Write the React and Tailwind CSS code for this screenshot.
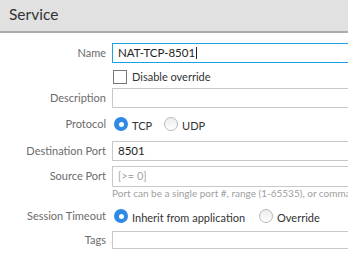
function Radio({ checked }) {
  return checked ? (
    <span className="flex h-[14px] w-[14px] shrink-0 items-center justify-center rounded-full bg-[#2f8ae6]">
      <span className="h-[5px] w-[5px] rounded-full bg-white" />
    </span>
  ) : (
    <span className="block h-[14px] w-[14px] shrink-0 rounded-full border border-[#b9b9b9] bg-gradient-to-b from-[#ededed] to-white" />
  );
}

function Row({ label, children, className = '' }) {
  return (
    <div className={`flex items-center gap-[6px] ${className}`}>
      <div className="w-[106px] shrink-0 text-right text-[11px] text-[#6b6b6b]">{label}</div>
      <div className="flex min-w-0 flex-1 items-center">{children}</div>
    </div>
  );
}

function Field({ value, placeholder, focused, h = 'h-[20px]' }) {
  return (
    <div
      className={`flex w-[260px] shrink-0 items-center border px-[5px] text-[11.5px] ${h} ${
        focused ? 'border-[#1aa0e6]' : 'border-[#c8c8c8]'
      }`}
    >
      {value ? (
        <span className="text-[#1e1e1e]">
          {value}
          {focused && <span className="ml-px inline-block h-[12px] w-px translate-y-[2px] bg-[#1e1e1e]" />}
        </span>
      ) : (
        <span className="text-[11px] text-[#a5a5a5]">{placeholder}</span>
      )}
    </div>
  );
}

export default function App() {
  return (
    <div className="h-[267px] w-[348px] overflow-hidden bg-white font-['Lato','Open_Sans',sans-serif]">
      <div className="flex h-[33px] items-center border-b-2 border-[#a9adb0] bg-[#e1e1e1] pl-[9px] pb-[2px]">
        <h1 className="text-[15.5px] text-[#333]">Service</h1>
      </div>
      <div className="pt-[10px]">
        <Row label="Name">
          <Field value="NAT-TCP-8501" focused />
        </Row>
        <Row label="" className="mt-[7px] h-[14px]">
          <span className="ml-px block h-[14px] w-[14px] border border-[#777] bg-white" />
          <span className="ml-[5px] text-[11px] text-[#333]">Disable override</span>
        </Row>
        <Row label="Description" className="mt-[4px]">
          <Field />
        </Row>
        <Row label="Protocol" className="mt-[9px] h-[14px]">
          <span className="ml-[2px] flex"><Radio checked /></span>
          <span className="ml-[4px] translate-y-[2px] text-[11px] text-[#333]">TCP</span>
          <span className="ml-[12px] flex"><Radio /></span>
          <span className="ml-[4px] translate-y-[2px] text-[11px] text-[#333]">UDP</span>
        </Row>
        <Row label="Destination Port" className="mt-[10px]">
          <Field value="8501" />
        </Row>
        <Row label="Source Port" className="mt-[5px]">
          <Field placeholder="[>= 0]" h="h-[21px]" />
        </Row>
        <div className="ml-[112px] whitespace-nowrap text-[10px] leading-[13px] text-[#a0a0a0]">
          Port can be a single port #, range (1-65535), or comma separated (80, 8080, 443)
        </div>
        <Row label="Session Timeout" className="mt-[9px] h-[14px]">
          <span className="ml-[2px] flex"><Radio checked /></span>
          <span className="ml-[4px] translate-y-[2px] text-[11px] text-[#333]">Inherit from application</span>
          <span className="ml-[14px] flex"><Radio /></span>
          <span className="ml-[4px] translate-y-[2px] text-[11px] text-[#333]">Override</span>
        </Row>
        <Row label="Tags" className="mt-[8px]">
          <Field h="h-[18px]" />
        </Row>
      </div>
    </div>
  );
}
